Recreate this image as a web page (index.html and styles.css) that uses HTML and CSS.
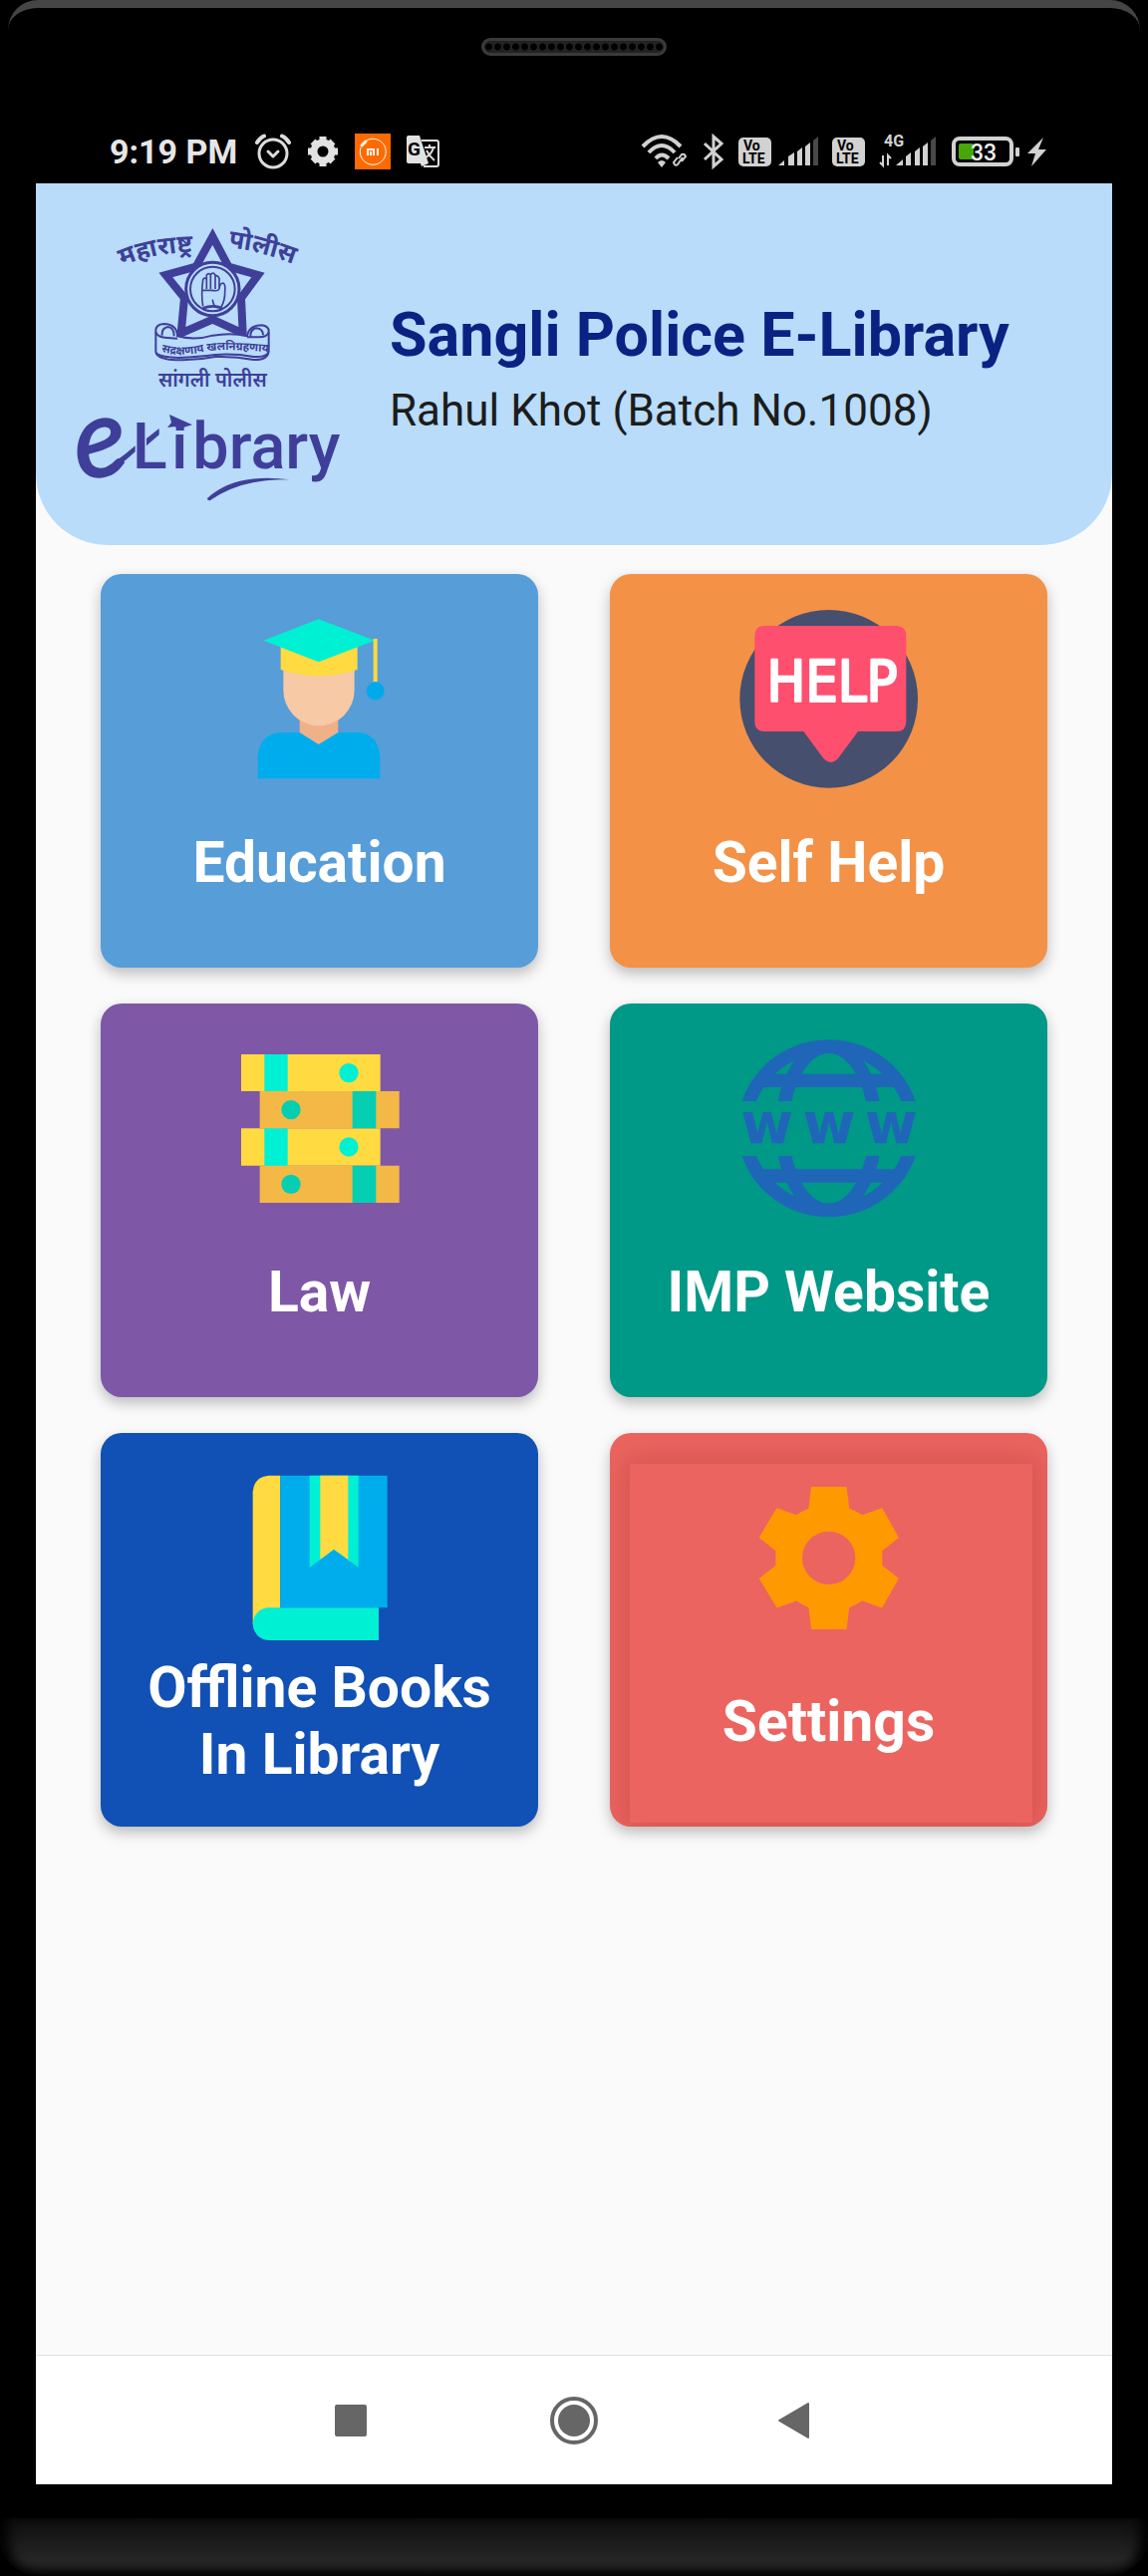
FILE: index.html
```html
<!DOCTYPE html>
<html lang="en">
<head>
    <meta charset="UTF-8">
    <meta name="viewport" content="width=device-width, initial-scale=1.0">
    <title>Sangli Police E-Library</title>
    <link rel="stylesheet" href="styles.css">
</head>
<body>

    <div class="frame-top">
        <div class="speaker"></div>
    </div>

    <div class="status-bar">
        <div class="status-left">
            <span class="time">9:19 PM</span>
            <div class="status-icons">
                <!-- alarm -->
                <svg width="36" height="36" viewBox="0 0 36 36" fill="none" stroke="#dcdcdc" stroke-width="3" stroke-linecap="round" stroke-linejoin="round">
                    <circle cx="18" cy="20" r="14"/>
                    <path d="M13 18l5 5 5-5"/>
                    <path d="M2 9q3-5 7-6.500M34 9q-3-5-7-6.500" stroke-width="4"/>
                </svg>
                <!-- gear -->
                <svg width="36" height="36" viewBox="0 0 36 36">
                    <circle cx="18" cy="18" r="9" fill="none" stroke="#e2e2e2" stroke-width="7"/>
                    <path d="M18 3V8M18 28V33M3 18H8M28 18H33M8 8L11 11M25 25L28 28M8 28L11 25M25 11L28 8" stroke="#e2e2e2" stroke-width="7"/>
                </svg>
                <!-- mi -->
                <svg width="36" height="36" viewBox="0 0 36 36">
                    <rect width="36" height="36" fill="#ff6a00"/>
                    <path d="M11 7.500A13 13 0 1 1 6 14" fill="none" stroke="#fff" stroke-width="1"/>
                    <path d="M7 12l4-4" stroke="#fff" stroke-width="3" stroke-linecap="round"/>
                    <path d="M13 22v-6h6v6M16 18v4M23 15v7" fill="none" stroke="#fff" stroke-width="2"/>
                </svg>
                <!-- translate -->
                <svg width="36" height="36" viewBox="0 0 36 36">
                    <path d="M17 7h15q2 0 2 2v22q0 2-2 2H19" fill="none" stroke="#dcdcdc" stroke-width="2"/>
                    <path d="M4 2h11l9 28H4q-2 0-2-2V4q0-2 2-2z" fill="#e2e2e2"/>
                    <path d="M17 33l7-3h-8z" fill="#e2e2e2"/>
                    <path d="M20 14h11M25 11v3M29 14q-2 7-8 10M22 17q3 6 8 10" fill="none" stroke="#dcdcdc" stroke-width="2"/>
                    <text class="glyph-g" x="3" y="22">G</text>
                </svg>
            </div>
        </div>
        <div class="status-icons">
            <!-- wifi -->
            <svg width="48" height="36" viewBox="0 0 48 36" fill="none" stroke="#d2d2d2" stroke-width="4">
                <path d="M2 13Q21-7 40 13M8 19Q21 5 34 19M15 25Q21 18 28 25"/>
                <path d="M17 29q4-4 8 0l-4 5z" fill="#d2d2d2" stroke="none"/>
                <path d="M38 25l3-4q3-1 4 2l-4 5M42 24l-5 7q-3 2-4-2l4-5" stroke-width="2"/>
            </svg>
            <!-- bluetooth -->
            <svg width="22" height="36" viewBox="0 0 22 36" fill="none" stroke="#d2d2d2" stroke-width="3">
                <path d="M2 10l17 16-8 7V3l8 7L2 26"/>
            </svg>
            <!-- sim 1 -->
            <svg width="80" height="36" viewBox="0 0 80 36">
                <rect y="4" width="33" height="29" rx="5" fill="#d2d2d2"/>
                <text class="volte" x="5" y="17">Vo</text>
                <text class="volte" x="4" y="30">LTE</text>
                <path d="M40 32l6-5v5zM50 32V23l6-4v13zM59 32V18l5-4v18zM67 32V13l5-4v23z" fill="#d2d2d2"/>
                <path d="M75 32V7l5-4v29z" fill="#484848"/>
            </svg>
            <!-- sim 2 -->
            <svg width="104" height="36" viewBox="0 0 104 36">
                <rect y="4" width="33" height="29" rx="5" fill="#d2d2d2"/>
                <text class="volte" x="5" y="17">Vo</text>
                <text class="volte" x="4" y="30">LTE</text>
                <text class="net" x="52" y="13">4G</text>
                <path d="M51 22v10l-3-3M56 32V22l3 3" fill="none" stroke="#d2d2d2" stroke-width="2"/>
                <path d="M64 32l7-6v6zM74 32V23l5-4v13zM83 32V18l5-4v18zM91 32V13l5-4v23z" fill="#d2d2d2"/>
                <path d="M99 32V7l5-4v29z" fill="#484848"/>
            </svg>
            <!-- battery -->
            <svg width="98" height="36" viewBox="0 0 98 36">
                <rect x="4" y="5" width="58" height="26" rx="6" fill="none" stroke="#d2d2d2" stroke-width="4"/>
                <rect x="9" y="10" width="15" height="16" rx="2" fill="#46a60a"/>
                <rect x="66" y="14" width="4" height="9" rx="1" fill="#d2d2d2"/>
                <text class="percent" x="21" y="27">33</text>
                <path d="M94 4L78 20h8l-4 13 15-17h-8z" fill="#d2d2d2"/>
            </svg>
        </div>
    </div>

    <div class="screen">
        <header class="header">
            <svg class="logo" viewBox="108 120 828 852" role="img" aria-label="Sangli Police eLibrary">
                <defs>
                    <path id="arcLeft" d="M260 250Q365 202 520 208"/>
                    <path id="arcRight" d="M578 192Q692 204 838 270"/>
                    <path id="arcRibbon" d="M378 507Q440 522 500 508T720 510"/>
                </defs>
                <g fill="none" stroke="#3f3f99">
                    <path d="M532 160L580 251 669 276 618 345 623 451 532 410 437 451 447 345 391 276 482 251Z" stroke-width="24" stroke-miterlimit="8"/>
                    <circle cx="532" cy="318" r="80" stroke-width="9" fill="#b8dcfa"/>
                    <circle cx="532" cy="318" r="67" stroke-width="6"/>
                    <path d="M503 370Q497 335 503 290Q508 282 514 288V276Q520 268 526 276Q533 264 540 276L548 280Q554 284 552 296V318Q553 302 563 300Q572 303 569 325Q570 352 558 372M514 288V318M526 276V318M540 276V318M503 322H530Q548 326 552 318M532 350Q534 372 548 374" stroke-width="5"/>
                    <path d="M503 376q30-12 58 0" stroke-width="8"/>
                    <!-- ribbon -->
                    <path d="M361 445Q360 425 385 423Q425 424 426 460Q480 474 532 458Q590 448 636 460Q640 428 680 427Q701 430 701 445V505Q698 533 655 531Q600 520 540 522Q470 536 400 530Q361 525 361 505Z" stroke-width="6" fill="#b8dcfa"/>
                    <path d="M361 448Q366 464 396 465L426 467M701 448Q696 464 668 463L636 463M380 458Q378 435 398 432Q416 434 416 460M684 457Q684 438 664 436Q646 438 646 460" stroke-width="6"/>
                    <path d="M362 512Q380 524 430 525Q490 522 540 516Q600 512 655 522Q690 524 700 510" stroke-width="6"/>
                </g>
                <text class="arc"><textPath href="#arcLeft">महाराष्ट्र</textPath></text>
                <text class="arc"><textPath href="#arcRight">पोलीस</textPath></text>
                <text class="motto"><textPath href="#arcRibbon">सद्रक्षणाय खलनिग्रहणाय</textPath></text>
                <text class="city" x="532" y="612">सांगली पोलीस</text>
                <text class="logo-e" x="116" y="880" transform="rotate(-8 200 800)">e</text>
                <path d="M205 878Q240 862 299 808V790Q240 842 190 866ZM333 790L371 757V738L333 768Z" fill="#3f3f99"/>
                <text class="logo-name" x="290 408 472" y="857">Library</text>
                <path d="M402 696L471 727 446 734V744H422V732L396 735 408 720Z" fill="#3f3f99"/>
                <path d="M516 948Q600 870 765 892Q620 888 524 955Q516 956 516 948Z" fill="#3f3f99"/>
            </svg>
            <div class="header-text">
                <h1>Sangli Police E-Library</h1>
                <p>Rahul Khot (Batch No.1008)</p>
            </div>
        </header>

        <main class="menu">
            <button class="card education">
                <svg class="card-icon" viewBox="1 36 540 540">
                    <path d="M210 360h116v60l-59 24-57-24z" fill="#f0b088"/>
                    <path d="M84 544V480Q88 408 155 405H210L267 441 326 405H385Q448 408 452 480V544Z" fill="#00adec"/>
                    <path d="M161 210H375V278A107 107 0 0 1 161 278Z" fill="#f7c9a5"/>
                    <path d="M153 140H384V216Q267 254 153 216Z" fill="#ffda40"/>
                    <path d="M267 64L436 128 267 193 101 128Z" fill="#00f0d4"/>
                    <path d="M432 123h12v130h-12z" fill="#ffda40"/>
                    <circle cx="438" cy="280" r="27" fill="#00a9ea"/>
                </svg>
                <span class="card-label">Education</span>
            </button>

            <button class="card self-help">
                <svg class="card-icon" viewBox="65 66 540 540">
                    <circle cx="334" cy="334" r="268" fill="#464f6e"/>
                    <path d="M141 114H537Q567 114 567 144V402Q567 432 537 432H422L362 513Q341 537 318 513L258 432H141Q111 432 111 402V144Q111 114 141 114Z" fill="#ff4f6e"/>
                    <text class="help-text" x="344" y="343">HELP</text>
                </svg>
                <span class="card-label">Self Help</span>
            </button>

            <button class="card law">
                <svg class="card-icon" viewBox="31 39 540 540">
                    <path d="M64 84H483V195H64ZM64 307H483V419H64Z" fill="#ffda40"/>
                    <path d="M120 195H540V307H120ZM120 419H540V531H120Z" fill="#f3b846"/>
                    <path d="M134 84H204V195H134ZM134 307H204V419H134Z" fill="#00f0d4"/>
                    <path d="M399 195H470V307H399ZM399 419H470V531H399Z" fill="#06ceb2"/>
                    <circle cx="388" cy="140" r="29" fill="#00f0d4"/>
                    <circle cx="388" cy="363" r="29" fill="#00f0d4"/>
                    <circle cx="214" cy="251" r="29" fill="#06ceb2"/>
                    <circle cx="214" cy="475" r="29" fill="#06ceb2"/>
                </svg>
                <span class="card-label">Law</span>
            </button>

            <button class="card website">
                <svg class="card-icon" viewBox="65 69 540 540">
                    <defs>
                        <clipPath id="globeParts"><path d="M60 60H610V255H60ZM60 420H610V610H60Z"/></clipPath>
                    </defs>
                    <g clip-path="url(#globeParts)" fill="none" stroke="#1f66b8" stroke-width="40">
                        <ellipse cx="334" cy="337" rx="254" ry="247"/>
                        <ellipse cx="334" cy="337" rx="140" ry="246"/>
                        <path d="M120 193H548M120 480H548"/>
                    </g>
                    <text class="www" x="148 335 522" y="381">www</text>
                </svg>
                <span class="card-label">IMP Website</span>
            </button>

            <button class="card offline">
                <svg class="card-icon" viewBox="1 42 540 540">
                    <path d="M69 510V112Q72 66 118 62H152V480Z" fill="#ffda40"/>
                    <path d="M152 62H474V460H152Z" fill="#00adec"/>
                    <path d="M240 62H387V339L313 284 240 339Z" fill="#00f0d4"/>
                    <path d="M272 62H356V315L313 284 272 315Z" fill="#ffda40"/>
                    <path d="M118 460H448V558H118A49 49 0 0 1 118 460Z" fill="#00f0d4"/>
                </svg>
                <span class="card-label">Offline Books In Library</span>
            </button>

            <button class="card settings">
                <svg class="card-icon" viewBox="425 162 540 540">
                    <path fill-rule="evenodd" fill="#ff9900" stroke="#ff9900" stroke-width="6" stroke-linejoin="round" d="M644 219H745L753 283Q776 291 794 304L853 283 901 368 852 407V454L901 493 853 577 794 556Q776 570 753 578L745 642H644L636 578Q615 570 597 556L539 577 488 493 537 454V407L488 368 539 283 597 304Q615 291 636 283ZM694 347A83 83 0 0 0 694 513A83 83 0 0 0 694 347Z"/>
                </svg>
                <span class="card-label">Settings</span>
            </button>
        </main>

        <nav class="nav-bar">
            <button class="nav-button" aria-label="Recent apps">
                <svg width="50" height="50" viewBox="0 0 50 50"><rect x="8" y="9" width="32" height="32" rx="2" fill="#666"/></svg>
            </button>
            <button class="nav-button" aria-label="Home">
                <svg width="50" height="50" viewBox="0 0 50 50">
                    <circle cx="25" cy="25" r="16" fill="#666"/>
                    <circle cx="25" cy="25" r="22" fill="none" stroke="#666" stroke-width="4"/>
                </svg>
            </button>
            <button class="nav-button" aria-label="Back">
                <svg width="50" height="50" viewBox="0 0 50 50"><path d="M37 8V42L8 25Z" fill="#666" stroke="#666" stroke-width="2" stroke-linejoin="round"/></svg>
            </button>
        </nav>
    </div>

    <div class="frame-bottom"></div>

</body>
</html>
```
FILE: styles.css
```css
* {
    box-sizing: border-box;
}
body {
    font-family: Roboto, "Noto Sans", sans-serif;
    background: #000;
    margin: 0;
    min-height: 100vh;
    display: flex;
    flex-direction: column;
}
button {
    font-family: inherit;
    border: none;
    padding: 0;
    cursor: pointer;
}
svg {
    display: block;
}

/* phone frame */
.frame-top {
    height: 120px;
    margin: 0 8px;
    padding-top: 30px;
    border-top: 8px solid #454545;
    border-radius: 30px 30px 0 0;
}
.speaker {
    width: 186px;
    height: 18px;
    margin: 0 auto;
    border: 3px solid #3a3a3a;
    border-radius: 9px;
    background: radial-gradient(circle, #000 3px, #222 4px) 0 0 / 9px 12px;
}
.frame-bottom {
    height: 58px;
    margin-top: 34px;
    border-radius: 0 0 40px 40px;
    background: linear-gradient(#0c0c0c, #262626 70%, #222 80%, #050505);
    box-shadow: inset 16px 0 12px -8px #000, inset -16px 0 12px -8px #000;
}

/* status bar */
.status-bar {
    height: 64px;
    padding: 0 101px 0 110px;
    display: flex;
    justify-content: space-between;
    align-items: center;
}
.status-left {
    display: flex;
    align-items: center;
    gap: 18px;
}
.status-icons {
    display: flex;
    align-items: center;
    gap: 14px;
}
.time {
    color: #e6e6e6;
    font-size: 34px;
    line-height: 40px;
    font-weight: 700;
}
.glyph-g {
    font-size: 19px;
    font-weight: 700;
    fill: #000;
}
.volte {
    font-size: 14px;
    font-weight: 700;
    fill: #000;
}
.net {
    font-size: 16px;
    font-weight: 700;
    fill: #d2d2d2;
}
.percent {
    font-size: 23px;
    font-weight: 500;
    fill: #f0f0f0;
}

/* app */
.screen {
    flex: 1;
    margin: 0 36px;
    background: #fafafa;
    display: flex;
    flex-direction: column;
}
.header {
    min-height: 363px;
    padding: 0 36px;
    background: #b8dcfa;
    border-radius: 0 0 72px 72px;
    display: flex;
    align-items: center;
    gap: 43px;
}
.logo {
    width: 276px;
    flex-shrink: 0;
}
.logo text {
    fill: #3f3f99;
    font-family: "Noto Sans", sans-serif;
}
.logo .arc {
    font-size: 76px;
    font-weight: 700;
}
.logo .motto {
    font-size: 34px;
    font-weight: 700;
}
.logo .city {
    font-size: 60px;
    font-weight: 600;
    text-anchor: middle;
}
.logo .logo-e {
    font-family: Lato, sans-serif;
    font-size: 330px;
    font-style: italic;
    font-weight: 400;
    stroke: #3f3f99;
    stroke-width: 6px;
}
.logo .logo-name {
    font-family: Roboto, sans-serif;
    font-size: 194px;
    font-weight: 500;
}
.header-text {
    padding-top: 8px;
}
.header-text h1 {
    margin: 0;
    color: #0a2383;
    font-size: 61px;
    line-height: 72px;
    font-weight: 700;
}
.header-text p {
    margin: 12px 0 0;
    color: #1c1c1c;
    font-size: 44px;
    line-height: 56px;
}

.menu {
    flex: 1;
    padding: 29px 65px;
    display: grid;
    grid-template-columns: 1fr 1fr;
    align-content: start;
    gap: 36px 72px;
}
.card {
    position: relative;
    min-height: 395px;
    padding: 36px 24px 33px;
    border-radius: 21px;
    box-shadow: 0 6px 14px rgba(0, 0, 0, 0.25);
    color: #fff;
    overflow: hidden;
    display: flex;
    flex-direction: column;
    align-items: center;
}
.card-icon {
    position: relative;
    width: 180px;
    height: 180px;
}
.card-label {
    position: relative;
    flex: 1;
    display: flex;
    align-items: center;
    font-size: 57px;
    line-height: 67px;
    font-weight: 700;
}
.education {
    background: #579dd8;
}
.self-help {
    background: #f39147;
}
.law {
    background: #7e57a7;
}
.website {
    background: #009887;
}
.offline {
    background: #1150b5;
}
.settings {
    background: #eb6460;
}
.settings::before {
    content: "";
    position: absolute;
    top: 31px;
    right: 15px;
    bottom: 4px;
    left: 20px;
    box-shadow: 0 0 24px 6px rgba(150, 40, 40, 0.25);
}
.help-text {
    font-family: "DejaVu Sans Condensed", "DejaVu Sans", sans-serif;
    font-size: 172px;
    font-weight: 400;
    fill: #fff;
    stroke: #fff;
    stroke-width: 7px;
    stroke-linejoin: round;
    text-anchor: middle;
}
.www {
    font-family: "DejaVu Sans", sans-serif;
    font-size: 172px;
    font-weight: 700;
    fill: #1f66b8;
    text-anchor: middle;
}

.nav-bar {
    height: 130px;
    border-top: 1px solid #e0e0e0;
    background: #fff;
    display: flex;
    justify-content: center;
    align-items: center;
    gap: 173px;
}
.nav-button {
    background: none;
}
```
